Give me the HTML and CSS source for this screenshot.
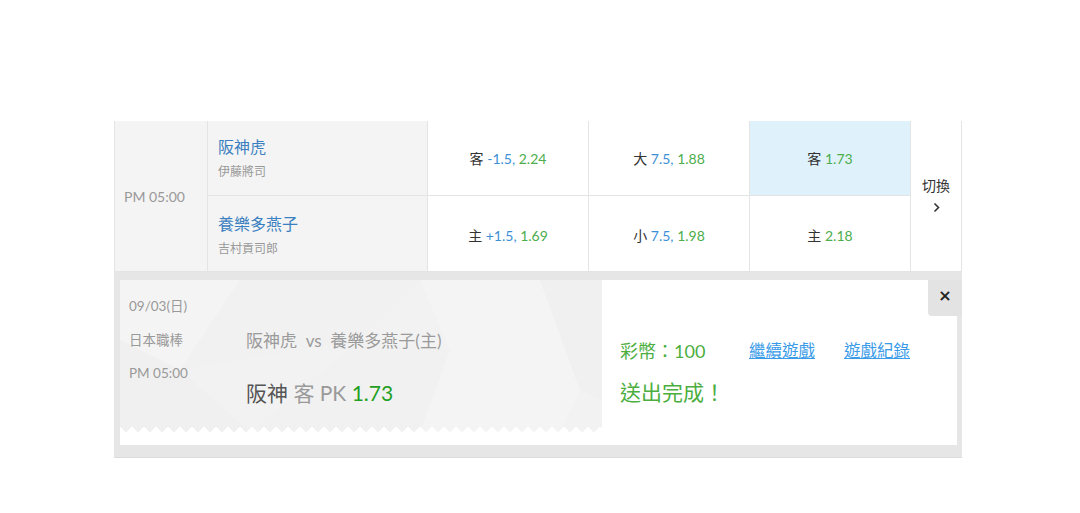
FILE: index.html
```html
<!DOCTYPE html>
<html lang="zh-TW">
<head>
    <meta charset="UTF-8">
    <title>投注結果</title>
    <link rel="stylesheet" href="styles.css">
</head>
<body>
    <div class="board">
        <table class="game-table">
            <colgroup>
                <col class="col-time">
                <col class="col-team">
                <col class="col-odds">
                <col class="col-odds">
                <col class="col-odds">
                <col class="col-switch">
            </colgroup>
            <tr>
                <td class="cell-time" rowspan="2">PM 05:00</td>
                <td class="cell-team">
                    <div class="team-name">阪神虎</div>
                    <div class="pitcher">伊藤將司</div>
                </td>
                <td class="cell-odds">客 <span class="line">-1.5,</span> <span class="price">2.24</span></td>
                <td class="cell-odds">大 <span class="line">7.5,</span> <span class="price">1.88</span></td>
                <td class="cell-odds selected">客 <span class="price">1.73</span></td>
                <td class="cell-switch" rowspan="2">
                    <div>切換</div>
                    <svg class="chevron" width="7" height="11" viewBox="0 0 7 11"><path d="M1.5 1.5 L5.5 5.5 L1.5 9.5" fill="none" stroke="#333" stroke-width="1.6"/></svg>
                </td>
            </tr>
            <tr>
                <td class="cell-team">
                    <div class="team-name">養樂多燕子</div>
                    <div class="pitcher">吉村貢司郎</div>
                </td>
                <td class="cell-odds">主 <span class="line">+1.5,</span> <span class="price">1.69</span></td>
                <td class="cell-odds">小 <span class="line">7.5,</span> <span class="price">1.98</span></td>
                <td class="cell-odds">主 <span class="price">2.18</span></td>
            </tr>
        </table>

        <div class="result-panel">
            <span class="close-btn">×</span>
            <div class="result-box">
                <div class="ticket">
                    <svg class="ticket-bg" width="482" height="152" viewBox="0 0 482 152">
                        <polygon points="0,0 120,0 60,90 0,60" fill="#f4f4f4"/>
                        <polygon points="120,0 300,0 240,60 60,90" fill="#f1f1f1"/>
                        <polygon points="300,0 420,0 460,110 330,70" fill="#f4f4f4"/>
                        <polygon points="240,60 330,70 300,152 130,152" fill="#f1f1f1"/>
                        <polygon points="0,60 60,90 130,152 0,152" fill="#f0f0f0"/>
                        <polygon points="420,0 482,0 482,120 460,110" fill="#f0f0f0"/>
                        <polygon points="330,70 460,110 440,152 300,152" fill="#f4f4f4"/>
                    </svg>
                    <div class="ticket-info">
                        <div>09/03(日)</div>
                        <div>日本職棒</div>
                        <div>PM 05:00</div>
                    </div>
                    <div class="ticket-main">
                        <div class="matchup">阪神虎&nbsp; vs&nbsp; 養樂多燕子(主)</div>
                        <div class="pick"><span class="pick-team">阪神</span> 客 PK <span class="pick-odds">1.73</span></div>
                    </div>
                </div>
                <div class="result-side">
                    <div class="side-row">
                        <span class="coins">彩幣：100</span>
                        <a class="side-link" href="#">繼續遊戲</a>
                        <a class="side-link" href="#">遊戲紀錄</a>
                    </div>
                    <div class="done">送出完成！</div>
                </div>
            </div>
        </div>
    </div>
</body>
</html>
```

FILE: styles.css
```css
/* Base */
body {
    margin: 0;
    background-color: #fff;
    font-family: 'Lato', 'Noto Sans CJK TC', sans-serif;
    color: #333;
}

.board {
    width: 848px;
    margin-left: 114px;
    padding-top: 121px;
}

/* Game table */
.game-table {
    width: 848px;
    table-layout: fixed;
    border-collapse: collapse;
}

.col-time { width: 93px; }
.col-team { width: 220px; }
.col-odds { width: 161px; }
.col-switch { width: 51px; }

.game-table td {
    height: 74px;
    padding: 0;
    border: 1px solid #e4e4e4;
    border-top: none;
    font-size: 14px;
}

.game-table tr:first-child td {
    border-bottom: 1px solid #e4e4e4;
}

.game-table tr:last-child td {
    height: 72px;
    padding-top: 3px;
}

.cell-time {
    background-color: #f4f4f4;
    color: #999;
    padding: 0 0 0 9px !important;
}

.cell-team {
    background-color: #f4f4f4;
    padding-left: 10px !important;
}

.team-name {
    color: #3a7fc0;
    font-size: 16px;
    line-height: 22px;
}

.pitcher {
    color: #999;
    font-size: 12px;
    line-height: 18px;
    margin-top: 5px;
}

.cell-odds {
    text-align: center;
    color: #333;
}

.cell-odds.selected {
    background-color: #dff2fc;
}

.cell-odds .line {
    color: #3d8fd6;
}

.cell-odds .price {
    color: #4cad4c;
}

.cell-switch {
    text-align: center;
    color: #333;
    line-height: 20px;
    padding-bottom: 4px !important;
}

.chevron {
    display: block;
    margin: 6px auto 0;
}

/* Result panel */
.result-panel {
    position: relative;
    background-color: #e6e6e6;
    padding: 8px 5px 12px 6px;
    border-bottom: 1px solid #dcdcdc;
}

.close-btn {
    position: absolute;
    top: 8px;
    right: 0;
    width: 34px;
    height: 36px;
    line-height: 32px;
    text-align: center;
    background-color: #e3e3e3;
    border-bottom-left-radius: 4px;
    font-family: 'DejaVu Sans', sans-serif;
    font-size: 16px;
    font-weight: bold;
    color: #222;
}

.result-box {
    display: flex;
    height: 165px;
    background-color: #fff;
}

/* Ticket on the left */
.ticket {
    position: relative;
    display: flex;
    width: 482px;
    height: 152px;
    background-color: #f2f2f2;
    overflow: hidden;
}

.ticket-bg {
    position: absolute;
    top: 0;
    left: 0;
}

.ticket::after {
    content: '';
    position: absolute;
    left: 0;
    right: 0;
    bottom: 0;
    height: 6px;
    background:
        linear-gradient(-45deg, #fff 4px, transparent 0),
        linear-gradient(45deg, #fff 4px, transparent 0);
    background-size: 12px 6px;
    background-repeat: repeat-x;
    background-position: left bottom;
}

.ticket-info {
    position: relative;
    width: 117px;
    padding: 10px 0 0 9px;
    color: #999;
    font-size: 13.5px;
    line-height: 33.5px;
}

.ticket-main {
    position: relative;
    padding-top: 48px;
}

.matchup {
    color: #9a9a9a;
    font-size: 17px;
    line-height: 26px;
}

.pick {
    margin-top: 24px;
    color: #9a9a9a;
    font-size: 21px;
    line-height: 30px;
}

.pick-team {
    color: #555;
}

.pick-odds {
    color: #23a023;
}

/* Right side */
.result-side {
    padding: 57px 0 0 18px;
    color: #4cae3f;
}

.side-row {
    display: flex;
    align-items: center;
    height: 26px;
}

.coins {
    font-size: 18px;
    width: 129px;
}

.side-link {
    color: #3a9be8;
    font-size: 16.5px;
    text-decoration: underline;
    margin-right: 29px;
}

.done {
    margin-top: 14px;
    font-size: 21px;
    line-height: 30px;
}
```
